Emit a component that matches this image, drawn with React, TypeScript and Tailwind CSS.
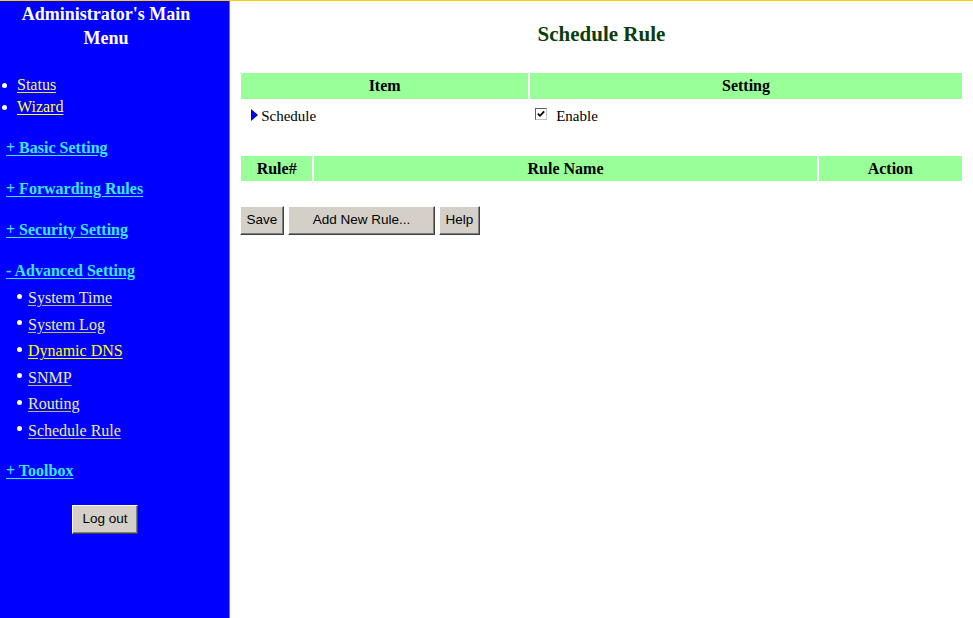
const serif = "font-['Liberation_Serif',serif]";

function Bullet({ className = '' }: { className?: string }) {
  return <span className={`inline-block w-[5px] h-[5px] rounded-full bg-white shrink-0 ${className}`} />;
}

function WinButton({ label, width }: { label: string; width: string }) {
  return (
    <button
      className={`${width} h-[29px] bg-[#d4d0c8] border border-t-white border-l-white border-r-[#404040] border-b-[#404040] shadow-[inset_-1px_-1px_0_#808080] text-[13.5px] text-black font-['Liberation_Sans',sans-serif] flex items-center justify-center`}
    >
      {label}
    </button>
  );
}

const sections = ['+ Basic Setting', '+ Forwarding Rules', '+ Security Setting'];
const advanced = [
  { label: 'System Time', bright: false },
  { label: 'System Log', bright: false },
  { label: 'Dynamic DNS', bright: true },
  { label: 'SNMP', bright: false },
  { label: 'Routing', bright: false },
  { label: 'Schedule Rule', bright: false },
];

export default function App() {
  return (
    <div className={`h-[618px] w-full flex border-t border-[#ffcc00] bg-white ${serif}`}>
      <aside className="w-[230px] shrink-0 bg-[#0000ff] border-r border-[#6666ff]">
        <div className="w-[212px] pt-[1px] text-center text-[18px] leading-[24px] font-bold text-white">
          Administrator's Main
          <br />
          Menu
        </div>

        <div className="mt-[24px]">
          <div className="h-[22px] flex items-center">
            <Bullet className="ml-[2px]" />
            <a className="ml-[10px] text-[16px] text-[#f2f27a] underline decoration-[#e6e640] underline-offset-2">Status</a>
          </div>
          <div className="h-[22px] flex items-center">
            <Bullet className="ml-[2px]" />
            <a className="ml-[10px] text-[16px] text-[#ffff33] underline decoration-[#ffff33] underline-offset-2">Wizard</a>
          </div>
        </div>

        {sections.map((s, i) => (
          <div key={s} className={`${i === 0 ? 'mt-[18px]' : 'mt-[17px]'} h-[24px] pl-[6px] leading-[24px]`}>
            <a className="text-[16px] font-bold text-[#3ce6ff] underline decoration-[#3ce6ff] underline-offset-2">{s}</a>
          </div>
        ))}
        <div className="mt-[17px] h-[24px] pl-[6px] leading-[24px]">
          <a className="text-[16px] font-bold text-[#3ce6ff] underline decoration-[#3ce6ff] underline-offset-2">- Advanced Setting</a>
        </div>

        <div className="mt-[2px]">
          {advanced.map((a) => (
            <div key={a.label} className="h-[26.5px] flex items-center">
              <Bullet className="ml-[17px] -mt-[4px]" />
              <a
                className={`ml-[6px] text-[16px] underline underline-offset-2 ${
                  a.bright ? 'text-[#ffff00] decoration-[#ffff00]' : 'text-[#ecec9a] decoration-[#b8b878]'
                }`}
              >
                {a.label}
              </a>
            </div>
          ))}
        </div>

        <div className="mt-[15px] h-[24px] pl-[6px] leading-[24px]">
          <a className="text-[16px] font-bold text-[#3ce6ff] underline decoration-[#3ce6ff] underline-offset-2">+ Toolbox</a>
        </div>

        <div className="mt-[22px] ml-[72px]">
          <WinButton label="Log out" width="w-[66px]" />
        </div>
      </aside>

      <main className="flex-1 min-w-0">
        <h1 className="mt-[21px] text-center text-[21px] leading-[24px] font-bold text-[#0b3d0b]">Schedule Rule</h1>

        <div className="w-[97%] mx-auto mt-[27px] text-[16px] text-black">
          <div className="grid grid-cols-[287px_1fr] gap-x-[2px]">
            <div className="h-[26px] bg-[#99ff99] flex items-center justify-center font-bold">Item</div>
            <div className="h-[26px] bg-[#99ff99] flex items-center justify-center font-bold">Setting</div>
            <div className="mt-[2px] h-[30px] flex items-center">
              <svg width="8" height="12" viewBox="0 0 8 12" className="ml-[10px] mt-[-2px]">
                <path d="M0 0 L7 6 L0 12 Z" fill="#0000dd" />
              </svg>
              <span className="ml-[2px] text-[15px]">Schedule</span>
            </div>
            <div className="mt-[2px] h-[30px] flex items-center">
              <span className="ml-[5px] -mt-[4px] w-[12px] h-[12px] bg-white border border-t-[#606060] border-l-[#606060] border-b-[#c0c0c0] border-r-[#c0c0c0] flex items-center justify-center">
                <svg width="8" height="8" viewBox="0 0 8 8">
                  <path d="M0.8 3.6 L3 5.8 L7.2 1.4" stroke="#000" strokeWidth="1.8" fill="none" />
                </svg>
              </span>
              <span className="ml-[9px] text-[15px]">Enable</span>
            </div>
          </div>

          <div className="mt-[25px] grid grid-cols-[71px_1fr_143px] gap-x-[2px]">
            <div className="h-[25px] bg-[#99ff99] flex items-center justify-center font-bold">Rule#</div>
            <div className="h-[25px] bg-[#99ff99] flex items-center justify-center font-bold">Rule Name</div>
            <div className="h-[25px] bg-[#99ff99] flex items-center justify-center font-bold">Action</div>
          </div>
        </div>

        <div className="mt-[25px] ml-[10px] flex gap-[4px]">
          <WinButton label="Save" width="w-[44px]" />
          <WinButton label="Add New Rule..." width="w-[147px]" />
          <WinButton label="Help" width="w-[41px]" />
        </div>
      </main>
    </div>
  );
}
